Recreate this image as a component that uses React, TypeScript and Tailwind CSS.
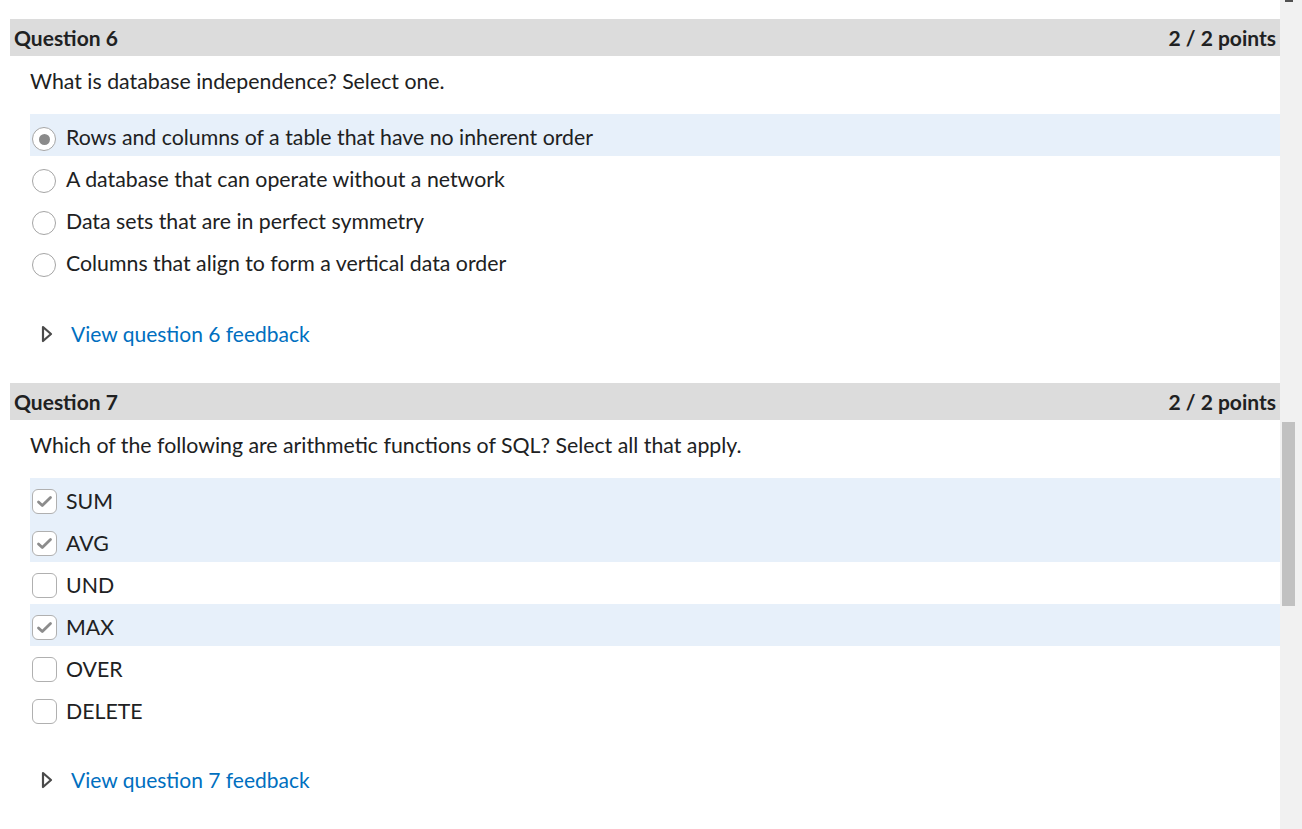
const Radio = ({ checked }: { checked?: boolean }) => (
  <span className="mt-[5px] mr-[10px] flex h-6 w-6 shrink-0 items-center justify-center rounded-full border border-[#a5a5a5] bg-white">
    {checked && <span className="h-[11px] w-[11px] rounded-full bg-[#8a8a8a]" />}
  </span>
);

const Checkbox = ({ checked }: { checked?: boolean }) => (
  <span className="mt-[3px] mr-[9px] flex h-[25px] w-[25px] shrink-0 items-center justify-center rounded-[6px] border border-[#b0b0b0] bg-white">
    {checked && (
      <svg width="17" height="15" viewBox="0 0 17 15" fill="none">
        <path d="M2.5 8l3.8 3.6L14.5 3.5" stroke="#8c8c8c" strokeWidth="2.8" strokeLinecap="round" strokeLinejoin="round" />
      </svg>
    )}
  </span>
);

const Triangle = () => (
  <svg width="12" height="18" viewBox="0 0 12 18" fill="none" className="shrink-0">
    <path d="M2 2L10 9L2 16Z" stroke="#4a4a4a" strokeWidth="2.2" strokeLinejoin="round" />
  </svg>
);

interface Option {
  label: string;
  selected?: boolean;
}

function QuestionBlock({
  number,
  prompt,
  options,
  multi,
}: {
  number: number;
  prompt: string;
  options: Option[];
  multi?: boolean;
}) {
  return (
    <section>
      <div className="ml-[10px] flex h-[37px] items-center justify-between bg-[#dcdcdc] px-1 text-[21px] font-bold text-[#202122]">
        <span>Question {number}</span>
        <span>2 / 2 points</span>
      </div>
      <p className="mt-[11px] mb-[19px] ml-[30px] text-[21.3px] leading-[28px] text-[#202122]">{prompt}</p>
      <div className="ml-[30px]">
        {options.map((o) => (
          <div
            key={o.label}
            className={`flex h-[42px] items-start pl-[2px] pt-[8px] ${o.selected ? 'bg-[#e7f0fa]' : ''}`}
          >
            {multi ? <Checkbox checked={o.selected} /> : <Radio checked={o.selected} />}
            <span className="mt-[1px] text-[21.3px] leading-[28px] text-[#202122]">{o.label}</span>
          </div>
        ))}
      </div>
      <div className={`ml-[41px] mb-[35px] flex h-[28px] items-center gap-[18px] ${multi ? 'mt-[36px]' : 'mt-[38px]'}`}>
        <Triangle />
        <span className="text-[21px] leading-[28px] text-[#006fbf]">View question {number} feedback</span>
      </div>
    </section>
  );
}

export default function App() {
  return (
    <div className="flex h-[829px] w-full overflow-hidden bg-white font-['Lato',sans-serif]">
      <main className="flex-1 pt-[19px]">
        <QuestionBlock
          number={6}
          prompt="What is database independence? Select one."
          options={[
            { label: 'Rows and columns of a table that have no inherent order', selected: true },
            { label: 'A database that can operate without a network' },
            { label: 'Data sets that are in perfect symmetry' },
            { label: 'Columns that align to form a vertical data order' },
          ]}
        />
        <QuestionBlock
          number={7}
          multi
          prompt="Which of the following are arithmetic functions of SQL? Select all that apply."
          options={[
            { label: 'SUM', selected: true },
            { label: 'AVG', selected: true },
            { label: 'UND' },
            { label: 'MAX', selected: true },
            { label: 'OVER' },
            { label: 'DELETE' },
          ]}
        />
      </main>
      <div className="flex w-[22px] shrink-0 flex-col bg-[#f1f1f1]">
        <div className="ml-[5px] h-[2px] w-[8px] bg-[#505050]" />
        <div className="mt-[420px] ml-[2px] h-[184px] w-[13px] bg-[#c1c1c1]" />
      </div>
    </div>
  );
}
